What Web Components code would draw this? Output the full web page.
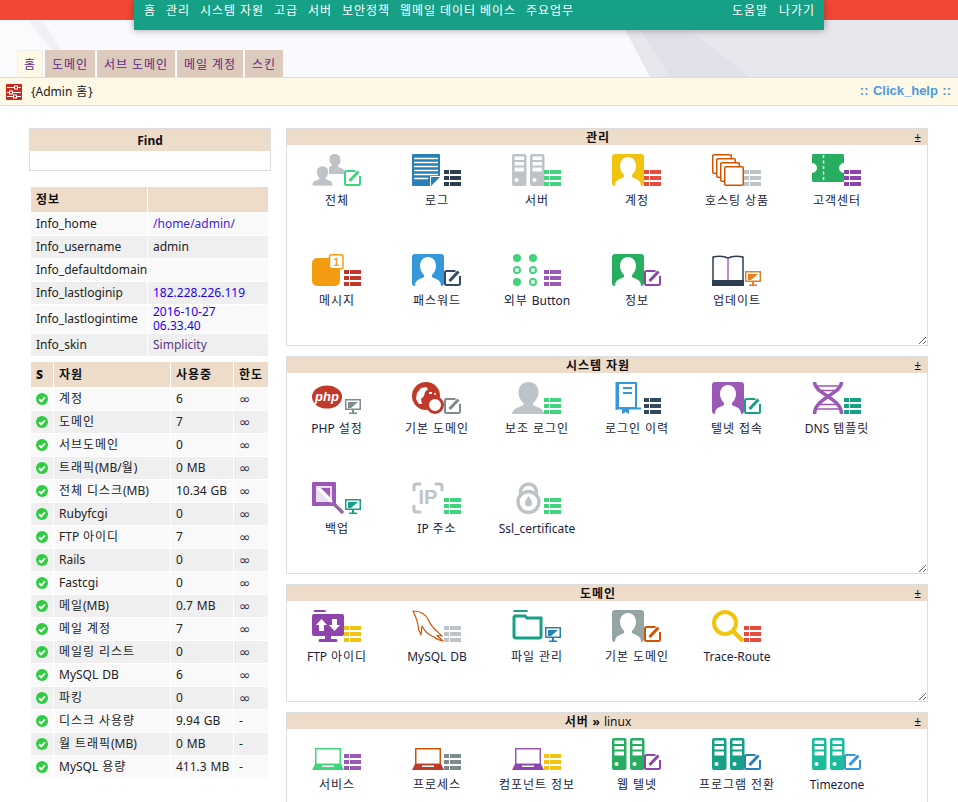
<!DOCTYPE html>
<html lang="ko">
<head>
<meta charset="utf-8">
<title>Admin</title>
<style>
  html { overflow: hidden; }
  body {
    margin: 0;
    background: #fff;
    color: #222;
    font: 12px/16px "Noto Sans", "Noto Sans CJK KR", sans-serif;
    word-spacing: .8px;
  }
  .k { letter-spacing: .96px; }
  .inf { font-family: "DejaVu Sans", sans-serif; font-size: 14px; color: #33334d; }
</style>
</head>
<body>
<top-head>
  <nav-link slot="left">홈</nav-link>
  <nav-link slot="left">관리</nav-link>
  <nav-link slot="left">시스템 자원</nav-link>
  <nav-link slot="left">고급</nav-link>
  <nav-link slot="left">서버</nav-link>
  <nav-link slot="left">보안정책</nav-link>
  <nav-link slot="left">웹메일 데이터 베이스</nav-link>
  <nav-link slot="left">주요업무</nav-link>
  <nav-link slot="right">도움말</nav-link>
  <nav-link slot="right">나가기</nav-link>
  <page-tab slot="tabs" active>홈</page-tab>
  <page-tab slot="tabs">도메인</page-tab>
  <page-tab slot="tabs">서브 도메인</page-tab>
  <page-tab slot="tabs">메일 계정</page-tab>
  <page-tab slot="tabs">스킨</page-tab>
</top-head>
<sub-bar>{Admin 홈}</sub-bar>
<main-layout>
  <find-box slot="side">Find</find-box>
  <side-table slot="side" kind="info">
    <side-row head><span>정보</span><span></span></side-row>
    <side-row><span>Info_home</span><span style="color:#3a1fe0">/home/admin/</span></side-row>
    <side-row><span>Info_username</span><span>admin</span></side-row>
    <side-row><span>Info_defaultdomain</span><span></span></side-row>
    <side-row><span>Info_lastloginip</span><span style="color:#2200ee">182.228.226.119</span></side-row>
    <side-row tall><span>Info_lastlogintime</span><span style="color:#2200ee;line-height:14px">2016-10-27<br>06.33.40</span></side-row>
    <side-row><span>Info_skin</span><span style="color:#5b3a86">Simplicity</span></side-row>
  </side-table>
  <side-table slot="side" kind="usage">
    <side-row head><b>S</b><span>자원</span><span>사용중</span><span>한도</span></side-row>
    <side-row><status-ok></status-ok><span>계정</span><span>6</span><span class="inf">∞</span></side-row>
    <side-row><status-ok></status-ok><span>도메인</span><span>7</span><span class="inf">∞</span></side-row>
    <side-row><status-ok></status-ok><span>서브도메인</span><span>0</span><span class="inf">∞</span></side-row>
    <side-row><status-ok></status-ok><span>트래픽(MB/월)</span><span>0 MB</span><span class="inf">∞</span></side-row>
    <side-row><status-ok></status-ok><span>전체 디스크(MB)</span><span>10.34 GB</span><span class="inf">∞</span></side-row>
    <side-row><status-ok></status-ok><span>Rubyfcgi</span><span>0</span><span class="inf">∞</span></side-row>
    <side-row><status-ok></status-ok><span>FTP 아이디</span><span>7</span><span class="inf">∞</span></side-row>
    <side-row><status-ok></status-ok><span>Rails</span><span>0</span><span class="inf">∞</span></side-row>
    <side-row><status-ok></status-ok><span>Fastcgi</span><span>0</span><span class="inf">∞</span></side-row>
    <side-row><status-ok></status-ok><span>메일(MB)</span><span>0.7 MB</span><span class="inf">∞</span></side-row>
    <side-row><status-ok></status-ok><span>메일 계정</span><span>7</span><span class="inf">∞</span></side-row>
    <side-row><status-ok></status-ok><span>메일링 리스트</span><span>0</span><span class="inf">∞</span></side-row>
    <side-row><status-ok></status-ok><span>MySQL DB</span><span>6</span><span class="inf">∞</span></side-row>
    <side-row><status-ok></status-ok><span>파킹</span><span>0</span><span class="inf">∞</span></side-row>
    <side-row><status-ok></status-ok><span>디스크 사용량</span><span>9.94 GB</span><span>-</span></side-row>
    <side-row><status-ok></status-ok><span>월 트래픽(MB)</span><span>0 MB</span><span>-</span></side-row>
    <side-row><status-ok></status-ok><span>MySQL 용량</span><span>411.3 MB</span><span>-</span></side-row>
  </side-table>

  <icon-panel slot="panels" rows="2">
    <span slot="title">관리</span>
    <icon-item icon="users" color="#bdc3c7" badge="edit" tint="#40d47e">전체</icon-item>
    <icon-item icon="doc" color="#2980b9" badge="list" tint="#2c3e50">로그</icon-item>
    <icon-item icon="servers" color="#bdc3c7" badge="list" tint="#40d47e">서버</icon-item>
    <icon-item icon="tile" color="#f1c40f" badge="list" tint="#e74c3c">계정</icon-item>
    <icon-item icon="stack" color="#d35400" badge="list" tint="#bdc3c7">호스팅 상품</icon-item>
    <icon-item icon="ticket" color="#27ae60" badge="list" tint="#8e44ad">고객센터</icon-item>
    <icon-item icon="msg" color="#f39c12" badge="list" tint="#c0392b">메시지</icon-item>
    <icon-item icon="tile" color="#3498db" badge="edit" tint="#34495e">패스워드</icon-item>
    <icon-item icon="dots" color="#40d47e" badge="list" tint="#9b59b6">외부 Button</icon-item>
    <icon-item icon="tile" color="#27ae60" badge="edit" tint="#8e44ad">정보</icon-item>
    <icon-item icon="book" color="#2c3e50" badge="screen" tint="#e67e22">업데이트</icon-item>
  </icon-panel>

  <icon-panel slot="panels" rows="2">
    <span slot="title">시스템 자원</span>
    <icon-item icon="php" color="#c0392b" badge="screen" tint="#7f8c8d">PHP 설정</icon-item>
    <icon-item icon="globe" color="#c0392b" badge="edit" tint="#7f8c8d">기본 도메인</icon-item>
    <icon-item icon="person" color="#bdc3c7" badge="list" tint="#40d47e">보조 로그인</icon-item>
    <icon-item icon="logbook" color="#3498db" badge="list" tint="#34495e">로그인 이력</icon-item>
    <icon-item icon="tile" color="#9b59b6" badge="edit" tint="#16a085">텔넷 접속</icon-item>
    <icon-item icon="dna" color="#9b59b6" badge="list" tint="#16a085">DNS 템플릿</icon-item>
    <icon-item icon="wand" color="#9b59b6" badge="screen" tint="#16a085">백업</icon-item>
    <icon-item icon="ip" color="#bdc3c7" badge="list" tint="#40d47e">IP 주소</icon-item>
    <icon-item icon="lock" color="#bdc3c7" badge="list" tint="#40d47e">Ssl_certificate</icon-item>
  </icon-panel>

  <icon-panel slot="panels" rows="1">
    <span slot="title">도메인</span>
    <icon-item icon="ftp" color="#8e44ad" badge="list" tint="#f1c40f">FTP 아이디</icon-item>
    <icon-item icon="dolphin" color="#d35400" badge="list" tint="#bdc3c7">MySQL DB</icon-item>
    <icon-item icon="folder" color="#16a085" badge="screen" tint="#2980b9">파일 관리</icon-item>
    <icon-item icon="tile" color="#95a5a6" badge="edit" tint="#d35400">기본 도메인</icon-item>
    <icon-item icon="search" color="#f1c40f" badge="list" tint="#e74c3c">Trace-Route</icon-item>
  </icon-panel>

  <icon-panel slot="panels" rows="2">
    <span slot="title">서버 » <span style="font-weight:400">linux</span></span>
    <icon-item icon="laptop" color="#40d47e" badge="list" tint="#9b59b6">서비스</icon-item>
    <icon-item icon="laptop" color="#c0392b" line="#d35400" badge="list" tint="#7f8c8d">프로세스</icon-item>
    <icon-item icon="laptop" color="#8e44ad" line="#9b59b6" badge="list" tint="#f1c40f">컴포넌트 정보</icon-item>
    <icon-item icon="servers" color="#27ae60" badge="edit" tint="#8e44ad">웹 텔넷</icon-item>
    <icon-item icon="servers" color="#16a085" badge="edit" tint="#2980b9">프로그램 전환</icon-item>
    <icon-item icon="servers" color="#1abc9c" badge="edit" tint="#3498db">Timezone</icon-item>
  </icon-panel>
</main-layout>

<script>
(function() {
  function ko(text) {
    return text.replace(/[\uac00-\ud7a3]+/g, '<span class="k">$&</span>');
  }

  // the reference hangul runs 12px per glyph, Noto runs 11.04
  function wrapHangul(root) {
    const walker = document.createTreeWalker(root, NodeFilter.SHOW_TEXT);
    const nodes = [];
    while (walker.nextNode()) nodes.push(walker.currentNode);
    nodes.forEach((node) => {
      if (node.parentNode.tagName === 'SCRIPT') return;
      if (!/[\uac00-\ud7a3]/.test(node.data)) return;
      const holder = document.createElement('template');
      holder.innerHTML = ko(node.data);
      node.replaceWith(holder.content);
    });
  }
  wrapHangul(document.body);

  function define(name, html, extra) {
    const template = document.createElement('template');
    template.innerHTML = html;
    class Base extends HTMLElement {
      constructor() {
        super();
        this.attachShadow({ mode: 'open' });
        this.shadowRoot.appendChild(template.content.cloneNode(true));
      }
    }
    window.customElements.define(name, extra ? extra(Base) : Base);
  }

  define('top-head', `
    <style>
      :host { display: block; position: relative; height: 77px; overflow: hidden; background: #f9f9fe; }
      svg.bg { position: absolute; left: 0; top: 0; }
      nav {
        position: relative;
        box-sizing: border-box;
        width: 690px;
        height: 30px;
        margin: 0 auto;
        padding: 3px 9px 0 10px;
        display: flex;
        justify-content: space-between;
        background: #16a085;
        box-shadow: 0 0 7px rgba(60, 40, 30, .45);
      }
      .group { display: flex; gap: 10px; }
      .group.right { gap: 11px; }
      .tabs { position: relative; display: flex; gap: 2px; padding: 20px 0 0 17px; }
    </style>
    <svg class="bg" width="958" height="77" viewBox="0 0 958 77">
      <rect width="958" height="77" fill="#f9f9fe"/>
      <polygon points="0,20 28,20 60,77 0,77" fill="#fbfbfd"/>
      <polygon points="28,20 42,20 62,50 52,50" fill="#f1f1f4"/>
      <polygon points="620,20 958,20 958,77 650,77" fill="#e7e7ed"/>
      <polygon points="690,30 750,77 670,77 640,30" fill="#e1e1ea"/>
      <rect width="958" height="20" fill="#f24734"/>
    </svg>
    <nav>
      <div class="group"><slot name="left"></slot></div>
      <div class="group right"><slot name="right"></slot></div>
    </nav>
    <div class="tabs"><slot name="tabs"></slot></div>
  `);

  define('nav-link', `
    <style>:host { display: block; color: #fff; white-space: nowrap; }</style>
    <slot></slot>
  `);

  define('page-tab', `
    <style>
      :host {
        display: block;
        box-sizing: border-box;
        height: 27px;
        padding: 7px 7px 0;
        background: #dccabc;
        color: #5b2a86;
        white-space: nowrap;
      }
      :host([active]) {
        padding: 6px 6px 0;
        background: #fef8e7;
        border: 1px solid #eeeeee;
        border-bottom: 0;
      }
    </style>
    <slot></slot>
  `);

  define('sub-bar', `
    <style>
      :host {
        display: flex;
        align-items: center;
        box-sizing: border-box;
        height: 29px;
        padding: 0 7px 0 6px;
        background: #fef8e7;
        border-top: 1px solid #dddddd;
        border-bottom: 1px solid #dddddd;
      }
      svg { margin-right: 9px; }
      .text { flex: 1; }
      .help { font: 700 13px/16px "Liberation Sans", sans-serif; color: #4a9ae0; padding-bottom: 2px; }
    </style>
    <svg width="16" height="16" viewBox="0 0 16 16">
      <rect width="16" height="16" rx="1" fill="#c9261c"/>
      <g stroke="#fff" stroke-width="1">
        <path d="M1 3.500h14M1 8.500h14M1 12.500h14"/>
      </g>
      <g fill="#c9261c" stroke="#fff" stroke-width="1">
        <rect x="8.500" y="2" width="3" height="3"/>
        <rect x="3.500" y="7" width="3" height="3"/>
        <rect x="7.500" y="11" width="3" height="3"/>
      </g>
    </svg>
    <div class="text"><slot></slot></div>
    <div class="help">:: Click_help ::</div>
  `);

  define('main-layout', `
    <style>
      :host { display: flex; gap: 15px; padding: 22px 30px 0 29px; }
      .side { width: 242px; flex: none; display: flex; flex-direction: column; }
      .panels { flex: 1; display: flex; flex-direction: column; gap: 10px; }
    </style>
    <div class="side"><slot name="side"></slot></div>
    <div class="panels"><slot name="panels"></slot></div>
  `);

  define('find-box', `
    <style>
      :host { display: block; box-sizing: border-box; height: 43px; border: 1px solid #dddddd; margin-bottom: 15px; }
      div { height: 22px; line-height: 23px; background: #eedccb; text-align: center; font-weight: 700; color: #111; }
    </style>
    <div><slot></slot></div>
  `);

  define('side-table', `
    <style>
      :host { display: block; width: 239px; margin-left: 1px; padding: 1px; box-sizing: border-box; margin-bottom: 4px; }
      div { display: flex; flex-direction: column; gap: 1px; }
    </style>
    <div><slot></slot></div>
  `, (Base) => class extends Base {
    connectedCallback() {
      const cols = this.getAttribute('kind') === 'info' ? '116px 120px' : '22px 116px 62px 34px';
      this.style.setProperty('--cols', cols);
    }
  });

  define('side-row', `
    <style>
      :host {
        display: grid;
        grid-template-columns: var(--cols);
        column-gap: 1px;
        height: 22px;
      }
      :host([tall]) { height: 28px; }
      :host([head]) { height: 25px; font-weight: 700; color: #111; }
      ::slotted(*) {
        display: block;
        padding-left: 5px;
        min-width: 0;
        white-space: nowrap;
        line-height: 22px;
        background: var(--row, #f9f9f9);
      }
      :host([head]) ::slotted(*) { background: #eedccb; line-height: 25px; }
      :host(:nth-child(odd):not([head])) { --row: #efefef; }
      :host([tall]) ::slotted(*) { line-height: 28px; }
    </style>
    <slot></slot>
  `);

  define('status-ok', `
    <style>
      :host { display: flex !important; align-items: center; box-sizing: border-box; padding: 0 0 1px 5px !important; }
    </style>
    <svg width="12" height="12" viewBox="0 0 12 12">
      <circle cx="6" cy="6" r="6" fill="#2ecc40"/>
      <path d="M3 6.200l2.200 2.200L9 4.400" fill="none" stroke="#fff" stroke-width="2"/>
    </svg>
  `);

  define('icon-panel', `
    <style>
      :host { display: block; border: 1px solid #dddddd; box-sizing: border-box; background: #fff; }
      .title {
        display: grid;
        grid-template-columns: 1fr auto 1fr;
        height: 16px;
        padding-right: 18px;
        line-height: 18px;
        background: #eedccb;
        font-weight: 700;
        color: #111;
      }
      .pm { grid-column: 3; justify-self: end; margin-right: -12px; font-weight: 400; }
      .body {
        display: grid;
        grid-template-columns: repeat(auto-fill, 100px);
        grid-auto-rows: 100px;
        overflow: auto;
        resize: vertical;
      }
      :host([rows="1"]) .body { height: 100px; }
      :host([rows="2"]) .body { height: 200px; }
    </style>
    <div class="title"><span style="grid-column:2"><slot name="title"></slot></span><span class="pm">±</span></div>
    <div class="body"><slot></slot></div>
  `);

  // main pictures are drawn in the left 32x32 of a 50x32 box
  const silhouette = 'M16 3c5 0 8 4 8 9 0 4-2 7-4 9l0 2c3 2 9 2 9 9H3c0-7 6-7 9-9v-2c-2-2-4-5-4-9 0-5 3-9 8-9z';
  const mains = {
    tile: (c) => `<rect width="32" height="32" rx="3" fill="${c}"/><path d="${silhouette}" fill="#fff"/>`,
    users: (c) => `<path fill="${c}" d="M23 0c3.500 0 5.500 2.500 5.500 6 0 3-1.500 5-2.500 6v1c2 1 7 1 7 7H17v-7c1-1 2-1 3-1v-1c-1-1-2.500-3-2.500-6 0-3.500 2-5 5.500-5z"/>
      <path fill="${c}" stroke="#fff" stroke-width=".8" d="M10.500 12c3.500 0 6 2.500 6 6 0 3-1.500 5-2.500 6v1c2 1 7 1 7 7H0c0-6 5-6 7-7v-1c-1-1-2.500-3-2.500-6 0-3.500 2.500-6 6-6z"/>`,
    doc: (c) => `<path fill="${c}" d="M1 0h26a1 1 0 0 1 1 1v21H18v10H1a1 1 0 0 1-1-1V1a1 1 0 0 1 1-1z"/>
      <path stroke="#fff" stroke-width="1.600" d="M2 4.500h24M2 8.500h24M2 12.500h24M2 16.500h24M2 20.500h24M2 24.500h14"/>
      <path fill="${c}" d="M19 23h9L19 32z"/>`,
    servers: (c) => [0, 18].map((x) => `<rect x="${x}" width="14.500" height="32" rx="2" fill="${c}"/>
      <g fill="#fff"><rect x="${x + 2.5}" y="2.500" width="9.500" height="3.500"/><rect x="${x + 2.5}" y="8" width="9.500" height="3.500"/><rect x="${x + 2.5}" y="13.500" width="9.500" height="4"/><circle cx="${x + 4.5}" cy="26" r="2"/></g>`).join(''),
    stack: (c) => [0, 4, 8, 12].map((o) => `<rect x="${o + 0.75}" y="${o + 0.75}" width="18.500" height="18.500" rx="1" fill="#fff" stroke="${c}" stroke-width="1.500"/>`).join(''),
    ticket: (c) => `<path fill="${c}" d="M1 0h30a1 1 0 0 1 1 1v8a5 5 0 0 0 0 10v8a1 1 0 0 1-1 1H1a1 1 0 0 1-1-1v-8a5 5 0 0 0 0-10V1a1 1 0 0 1 1-1z"/>
      <path stroke="#fff" stroke-width="1.500" stroke-dasharray="3 2.500" d="M11.500 1v27"/>`,
    msg: (c) => `<rect y="4" width="28" height="28" rx="5" fill="${c}"/>
      <rect x="17.500" y=".75" width="13.500" height="14" rx="2" fill="#fff" stroke="${c}" stroke-width="1.500"/>
      <text x="24.200" y="12" text-anchor="middle" font-size="10" font-weight="700" fill="${c}" font-family="Liberation Sans">1</text>`,
    dots: (c) => [[5, 4], [21, 4], [5, 28]].map(([x, y]) => `<circle cx="${x}" cy="${y}" r="4" fill="${c}"/>`).join('') +
      [[5, 16], [21, 16], [21, 28]].map(([x, y]) => `<circle cx="${x}" cy="${y}" r="3" fill="none" stroke="${c}" stroke-width="2"/>`).join(''),
    book: (c) => `<path fill="#fff" stroke="${c}" stroke-width="1.500" d="M1 3c5-1 11-1 15 1 4-2 10-2 15-1v24H1z"/>
      <path stroke="#8e44ad" stroke-width="1.200" d="M16 4v23"/><rect y="26" width="32" height="6" fill="${c}"/>`,
    php: (c) => `<ellipse cx="15" cy="15" rx="15" ry="11.500" fill="${c}"/>
      <text x="15" y="19" text-anchor="middle" font-size="13" font-weight="700" font-style="italic" fill="#fff" font-family="Liberation Sans">php</text>`,
    globe: (c) => `<circle cx="14" cy="14" r="14" fill="${c}"/>
      <path fill="#fff" d="M9 6l5-1 2 2-3 3-1 4-3 3 1 5-3 0-3-5 1-6z"/><path fill="#fff" d="M17 10h3v2h-3zM22 11h2v1.500h-2z"/>
      <circle cx="23" cy="23" r="7.500" fill="#fff" stroke="${c}" stroke-width="3"/>`,
    person: (c) => `<path fill="${c}" d="M16.500 0c6 0 10 4 10 10 0 5-3 9-5.500 11v2c3 2 11 3 11 9H0c1-6 8-7 11.500-9v-2C9 19 6.500 15 6.500 10c0-6 4-10 10-10z"/>`,
    logbook: (c) => `<path fill="#fff" stroke="${c}" stroke-width="2" d="M6 1h18v25H6z"/>
      <path stroke="${c}" stroke-width="2" d="M4.500 0v28M4 26.500h25M11 6h9M11 11h9"/>
      <path fill="${c}" d="M10 25h7v7l-3.500-2-3.500 2z"/>`,
    dna: (c) => `<g fill="none" stroke="${c}" stroke-width="3.500"><path d="M2.500 0c0 12 27 16 27 32"/><path d="M29.500 0c0 12-27 16-27 32"/></g>
      <path stroke="${c}" stroke-width="1.600" d="M3 4h26M5 8.500h22M7 22.500h18M4 27h24"/>`,
    wand: (c) => `<rect width="24" height="24" rx="1" fill="${c}"/><rect x="4" y="4" width="16" height="16" fill="#eadff0"/>
      <path fill="${c}" d="M9 6h9v9z"/><path stroke="#fff" stroke-width="2.500" d="M6 6l14 14"/>
      <path stroke="#8e6aa0" stroke-width="3.500" stroke-linecap="round" d="M22 22l8 8"/>`,
    ip: (c) => `<path fill="none" stroke="${c}" stroke-width="3" stroke-linecap="round" d="M2 8V4a2 2 0 0 1 2-2h4M24 2h4a2 2 0 0 1 2 2v4M2 24v4a2 2 0 0 0 2 2h4"/>
      <text x="16" y="22" text-anchor="middle" font-size="20" font-weight="700" fill="${c}" font-family="Liberation Sans">IP</text>`,
    lock: (c) => `<circle cx="16.500" cy="10" r="8" fill="none" stroke="${c}" stroke-width="3.500"/>
      <circle cx="16.500" cy="20" r="10.500" fill="#fff" stroke="${c}" stroke-width="3.500"/>
      <path fill="${c}" d="M16.500 14c2 3 3.500 5 3.500 7a3.500 3.500 0 0 1-7 0c0-2 1.500-4 3.500-7z"/>`,
    ftp: (c) => `<path fill="${c}" d="M2 0h10a2 2 0 0 1 2 2H2zM2 4h28a2 2 0 0 1 2 2v18a2 2 0 0 1-2 2H2a2 2 0 0 1-2-2V6a2 2 0 0 1 2-2z"/>
      <path fill="${c}" d="M13 26h6v3h-6zM8 29h16a1.500 1.500 0 0 1 0 3H8a1.500 1.500 0 0 1 0-3z"/>
      <path fill="#fff" d="M9.500 9l5.500 6h-3v6h-5v-6H4zM22.500 21l5.500-6h-3V9h-5v6h-3z"/>`,
    dolphin: (c) => `<path fill="#fff" stroke="${c}" stroke-width="1.200" stroke-linejoin="round" d="M1 1c7 0 13 3 16 10 2 6 8 10 13 15l-5-.5L31 31c-4-1-7-2-9-4-5-2-10-7-12-11l-1 9c-2-3-3-7-3-10C5 9 3 5 1 1z"/>`,
    folder: (c) => `<path fill="#fff" stroke="${c}" stroke-width="3" d="M3 6h10l2 2h14v18a2 2 0 0 1-2 2H4a2 2 0 0 1-2-2V7z"/>
      <path fill="${c}" d="M3 0h11a2 2 0 0 1 2 2H1a2 2 0 0 1 2-2z"/>`,
    search: (c) => `<circle cx="13" cy="13" r="11" fill="none" stroke="${c}" stroke-width="4"/><path stroke="${c}" stroke-width="4.500" d="M21 21l10 10"/>`,
    laptop: (c, line) => `<rect x="3.750" y="10.750" width="24.500" height="15.500" fill="#fff" stroke="${line || c}" stroke-width="1.500"/>
      <path fill="${c}" d="M3 26h26l3 6H0z"/><rect x="10" y="27.500" width="12" height="1.500" fill="#fff"/>`
  };

  function badge(kind, c) {
    if (kind === 'list') {
      return [16, 22, 28].map((y) => `<rect x="32" y="${y}" width="5" height="4" fill="${c}"/><rect x="38" y="${y}" width="11" height="4" fill="${c}"/>`).join('');
    }
    if (kind === 'edit') {
      return `<rect x="33" y="17" width="15" height="14" rx="1.500" fill="#fff" stroke="${c}" stroke-width="2"/>
        <path fill="#fff" d="M43 15h7v7h-3l-3-3z"/>
        <path stroke="${c}" stroke-width="3" d="M37.500 27l9-9.500"/>`;
    }
    return `<rect x="33.750" y="17.750" width="14.500" height="9.500" fill="#fff" stroke="${c}" stroke-width="1.500"/>
      <path fill="${c}" d="M36 20h10l-7 6h-3z"/><rect x="40" y="28" width="2" height="3" fill="${c}"/><rect x="37" y="30.500" width="8" height="1.500" fill="${c}"/>`;
  }

  define('icon-item', `
    <style>
      :host {
        display: flex;
        flex-direction: column;
        align-items: center;
        box-sizing: border-box;
        padding-top: 9px;
        color: #1c1c3c;
        white-space: nowrap;
      }
      svg { display: block; width: 50px; height: 32px; flex: none; }
      .label { margin-top: 7px; }
    </style>
    <svg viewBox="0 0 50 32"></svg>
    <div class="label"><slot></slot></div>
  `, (Base) => class extends Base {
    connectedCallback() {
      const color = this.getAttribute('color');
      const tint = this.getAttribute('tint');
      const main = mains[this.getAttribute('icon')](color, this.getAttribute('line'));
      this.shadowRoot.querySelector('svg').innerHTML = main + badge(this.getAttribute('badge'), tint);
    }
  });
})()
</script>
</body>
</html>
